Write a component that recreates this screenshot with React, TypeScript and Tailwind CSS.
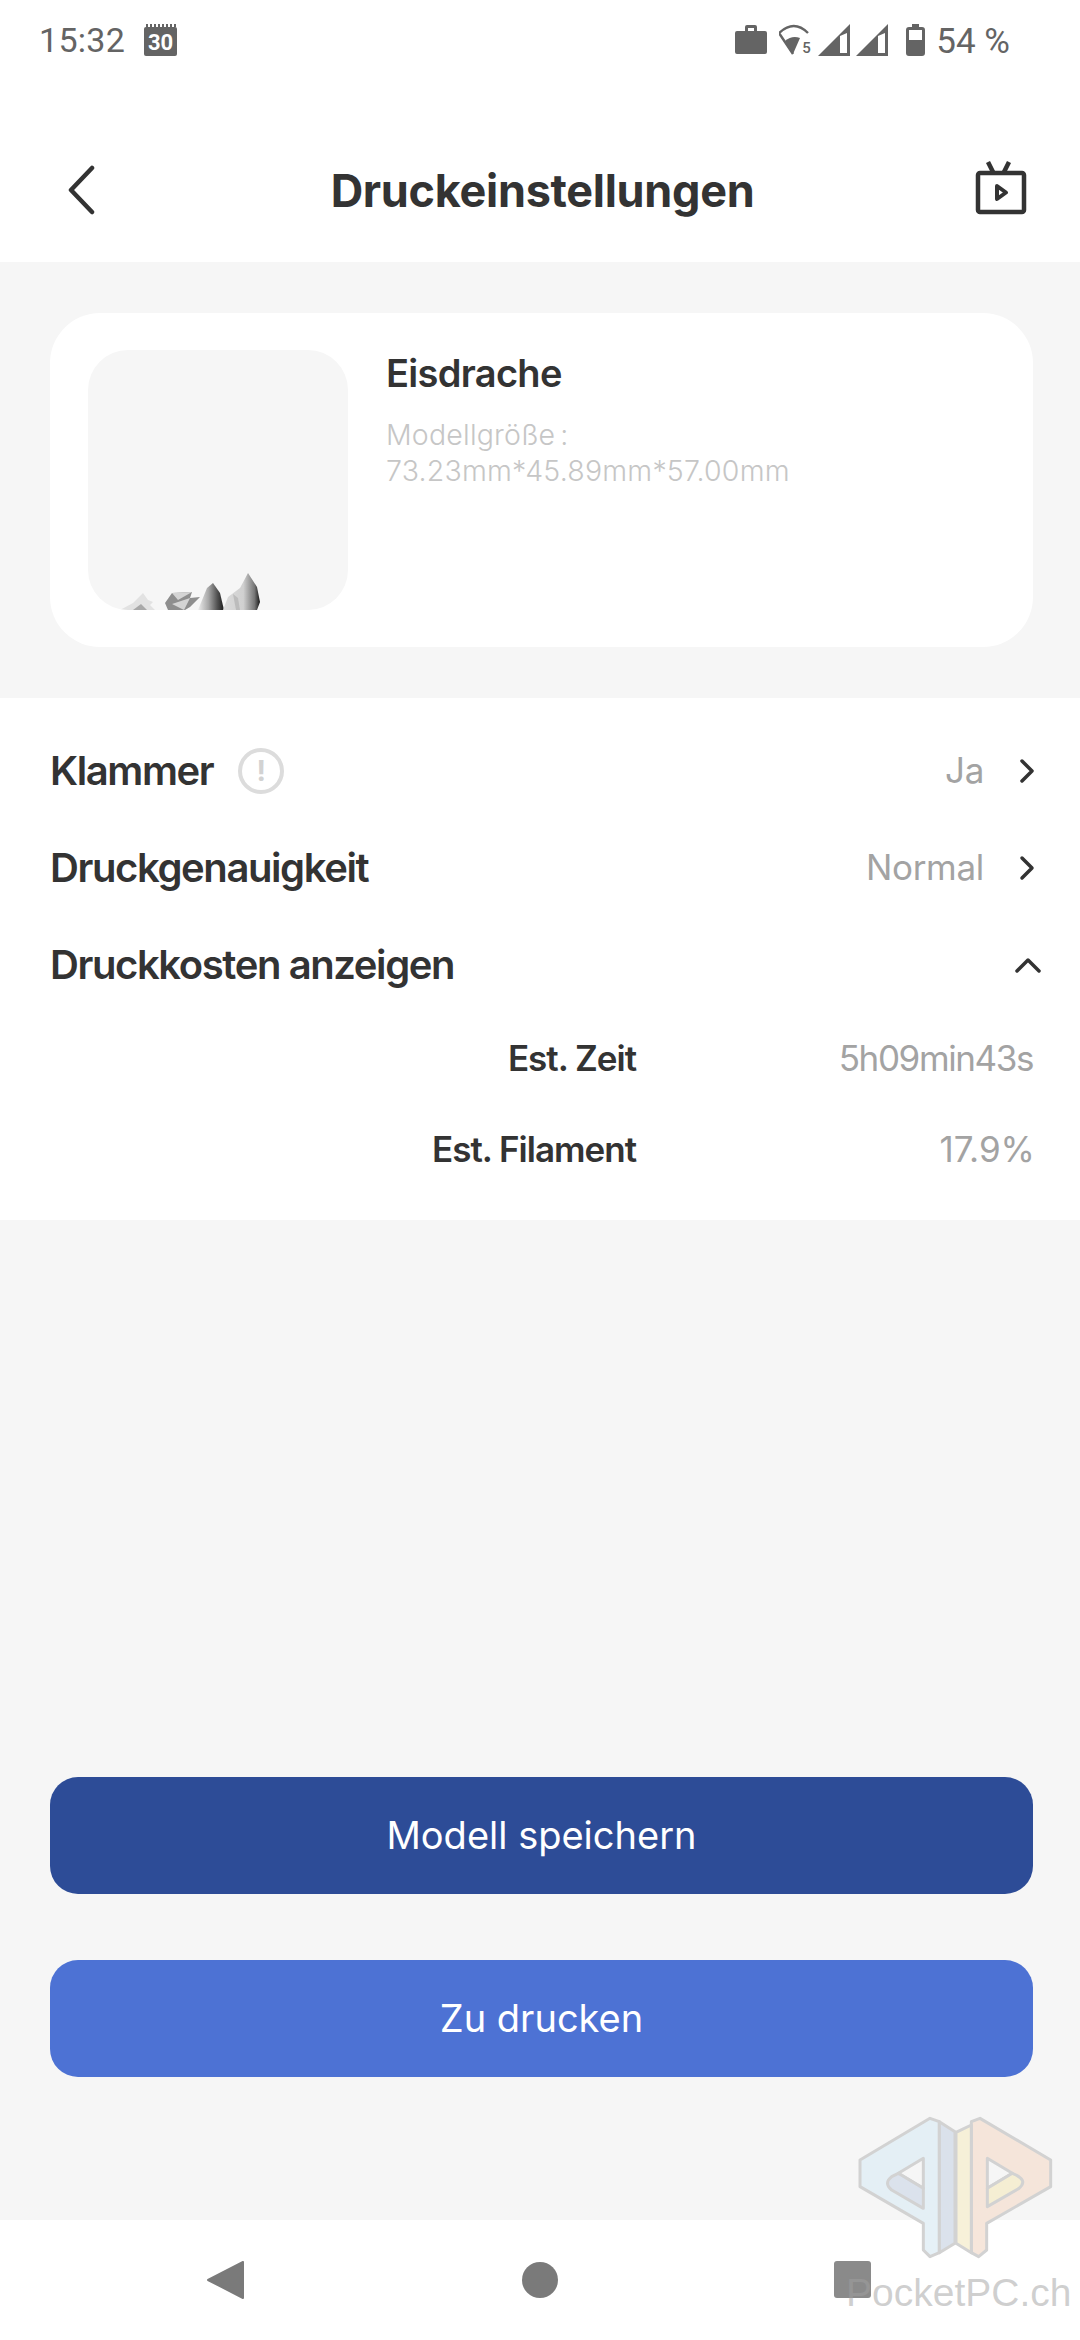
function StatusBar() {
  return (
    <div className="h-[80px] flex items-start justify-between pt-[24px] pl-[39px] pr-[70px] font-['Roboto',sans-serif] text-[#646464]">
      <div className="flex items-center gap-[19px] h-[32px]">
        <span className="text-[34px] leading-[32px] tracking-[0.3px]">15:32</span>
        <svg width="33" height="32" viewBox="0 0 33 32">
          <rect x="0" y="3" width="33" height="29" rx="2" fill="#646464" />
          <path d="M3 0v3M7 0v3M11 0v3M15 0v3M19 0v3M23 0v3M27 0v3M31 0v3" stroke="#646464" strokeWidth="2" />
          <text x="16.5" y="26" textAnchor="middle" fontSize="22" fontWeight="700" fontFamily="Roboto, sans-serif" fill="#fff">30</text>
        </svg>
      </div>
      <div className="flex items-center h-[32px]">
        <svg width="32" height="32" viewBox="0 0 32 32" className="mr-[12px]">
          <path d="M10 7V3a2 2 0 0 1 2-2h8a2 2 0 0 1 2 2v4h8a2 2 0 0 1 2 2v19a2 2 0 0 1-2 2H2a2 2 0 0 1-2-2V9a2 2 0 0 1 2-2zm3-3v3h6V4z" fill="#646464" fillRule="evenodd" />
        </svg>
        <svg width="33" height="32" viewBox="0 0 33 32" className="mr-[6px]">
          <path d="M29 9Q15-5 0 9L14 30" fill="none" stroke="#646464" strokeWidth="2.4" />
          <path d="M6 17Q13 11 21 14L14 30z" fill="#646464" />
          <text x="27.500" y="29" textAnchor="middle" fontSize="15" fontWeight="500" fontFamily="Roboto, sans-serif" fill="#646464">5</text>
        </svg>
        <svg width="32" height="32" viewBox="0 0 32 32" className="mr-[6px]">
          <path d="M0 32L32 0v32zM22 12v17h7V9z" fill="#646464" fillRule="evenodd" />
        </svg>
        <svg width="32" height="32" viewBox="0 0 32 32" className="mr-[18px]">
          <path d="M0 32L32 0v32zM22 12v17h7V9z" fill="#646464" fillRule="evenodd" />
        </svg>
        <svg width="19" height="32" viewBox="0 0 19 32" className="mr-[11px]">
          <path d="M6 0h7v3h3a3 3 0 0 1 3 3v23a3 3 0 0 1-3 3H3a3 3 0 0 1-3-3V6a3 3 0 0 1 3-3h3zM3 6v10h13V6z" fill="#646464" fillRule="evenodd" />
        </svg>
        <span className="text-[35px] leading-[32px] whitespace-nowrap mt-[3px]">54 %</span>
      </div>
    </div>
  );
}

function Header() {
  return (
    <div className="h-[182px] pt-[38px] flex items-center justify-between pl-[67px] pr-[53px]">
      <svg width="28" height="50" viewBox="0 0 28 50" fill="none" stroke="#333" strokeWidth="4.500" strokeLinecap="round" strokeLinejoin="round">
        <path d="M25 3L4 25l21 22" />
      </svg>
      <h1 className="ml-[15px] text-[45px] font-bold text-[#333] tracking-[-0.3px] leading-none">Druckeinstellungen</h1>
      <svg width="52" height="54" viewBox="0 0 52 54" fill="none" stroke="#333" strokeWidth="4.500" strokeLinejoin="round" className="-mt-[5px]">
        <path d="M13 1l5 10M34 1l-5 10" />
        <rect x="3" y="12" width="46" height="39" rx="2" />
        <path d="M22 25l9 6.500-9 6.500z" strokeWidth="4" />
      </svg>
    </div>
  );
}

function ModelPreview() {
  return (
    <div className="w-[260px] h-[260px] shrink-0 rounded-[40px] bg-[#f6f6f6] overflow-hidden flex items-end">
      <svg width="260" height="40" viewBox="0 0 260 40">
        <defs>
          <linearGradient id="rock" x1="0" y1="0" x2="1" y2="0">
            <stop offset="0" stopColor="#ededed" />
            <stop offset="0.4" stopColor="#a8a8a8" />
            <stop offset="0.75" stopColor="#505050" />
            <stop offset="1" stopColor="#1a1a1a" />
          </linearGradient>
          <linearGradient id="rock2" x1="0" y1="0" x2="1" y2="0">
            <stop offset="0" stopColor="#dcdcdc" />
            <stop offset="0.55" stopColor="#d0d0d0" />
            <stop offset="0.85" stopColor="#777" />
            <stop offset="1" stopColor="#161616" />
          </linearGradient>
        </defs>
        <path d="M32 40l13-7 10-10 5 7 5 2-3 3 5 5z" fill="#e2e2e2" />
        <path d="M45 40l8-6 6 6z" fill="#a8a8a8" />
        <path d="M77 33l7-10 20-1-2 6 10-1-10 10-5 3H80z" fill="#8e8e8e" />
        <path d="M84 23l20-1-14 8zM84 34l18-6-6 12z" fill="#d4d4d4" />
        <path d="M110 40l9-22 6-5 7 10 4 17z" fill="url(#rock)" />
        <path d="M135 40l5-13 12-9 8-15 9 14 3 15-3 8z" fill="url(#rock2)" />
        <path d="M145 24l5 4 2 12h-4z" fill="#bcbcbc" />
      </svg>
    </div>
  );
}

function SettingRow({ label, value, info }: { label: string; value?: string; info?: boolean }) {
  return (
    <div className="h-[97px] flex items-center justify-between">
      <div className="flex items-center gap-[25px]">
        <span className="text-[40px] font-semibold text-[#333] tracking-[-1.4px]">{label}</span>
        {info && (
          <div className="w-[46px] h-[46px] rounded-full border-[4px] border-[#dcdcdc] flex items-center justify-center text-[28px] font-bold text-[#d2d2d2] leading-none">
            !
          </div>
        )}
      </div>
      <div className="flex items-center">
        {value && <span className="text-[35px] text-[#a3a3a3] tracking-[-0.3px]">{value}</span>}
        {value ? (
          <svg width="16" height="26" viewBox="0 0 16 26" fill="none" stroke="#333" strokeWidth="3.500" strokeLinecap="round" strokeLinejoin="round" className="ml-[35px] -mr-[2px]">
            <path d="M3 3l10 10L3 23" />
          </svg>
        ) : (
          <svg width="28" height="16" viewBox="0 0 28 16" fill="none" stroke="#333" strokeWidth="3.500" strokeLinecap="round" strokeLinejoin="round" className="-mr-[9px]">
            <path d="M3 14L14 3l11 11" />
          </svg>
        )}
      </div>
    </div>
  );
}

function CostRow({ label, value, tight }: { label: string; value: string; tight?: boolean }) {
  return (
    <div className="h-[91px] flex items-center">
      <span className="w-[586px] text-right text-[35px] font-semibold text-[#333] tracking-[-1px]">{label}</span>
      <span className={tight ? "flex-1 text-right text-[35px] text-[#a3a3a3] tracking-[-1.4px]" : "flex-1 text-right text-[35px] text-[#a3a3a3] -mr-[2px]"}>{value}</span>
    </div>
  );
}

function Watermark() {
  return (
    <div className="absolute left-[780px] top-[2080px] w-[300px] h-[260px] pointer-events-none">
      <svg width="300" height="260" viewBox="0 0 900 780" fill="none" stroke="#d2d2d2" strokeWidth="9" strokeLinejoin="round">
        <path d="M450 115L240 240v80l190 110v80l20 20 28-12V125z M430 235l-75 45 75 45z" fill="#e0edf5" fillOpacity="0.8" fillRule="evenodd" />
        <path d="M478 125l47 30v335l-47 28z" fill="#d5dde9" fillOpacity="0.85" />
        <path d="M355 280l75 45v60l-95-55q-25-20 0-40z" fill="#d8dfea" fillOpacity="0.8" />
        <path d="M600 115l212 125v80L620 430v80l-24 20-22-12V125z M622 235l75 45-75 45z" fill="#f5e2d5" fillOpacity="0.85" fillRule="evenodd" />
        <path d="M574 135l-46 22v333l46 28z" fill="#f6eed2" fillOpacity="0.85" />
        <path d="M622 325l75-45q50 20 20 45l-95 55z" fill="#f5eed2" fillOpacity="0.9" />
      </svg>
      <span className="absolute left-[66px] top-[189px] font-['Liberation_Sans',sans-serif] text-[39px] leading-[48px] text-[#a0a0a0]/50 whitespace-nowrap">
        PocketPC.ch
      </span>
    </div>
  );
}

export default function App() {
  return (
    <div className="relative w-[1080px] h-[2340px] bg-[#f6f6f6] flex flex-col overflow-hidden font-['Inter','Noto_Sans',sans-serif]">
      <div className="bg-white">
        <StatusBar />
        <Header />
      </div>

      <div className="pl-[50px] pr-[47px] pt-[51px] pb-[51px]">
        <div className="h-[334px] rounded-[50px] bg-white pl-[38px] pt-[37px] flex gap-[38px]">
          <ModelPreview />
          <div>
            <div className="text-[38px] font-semibold text-[#333] leading-[46px] tracking-[-0.7px]">Eisdrache</div>
            <div className="mt-[21px] text-[28.500px] leading-[36px] text-[#c6c6c6] font-light tracking-[0.2px]">
              Modellgröße<span className="ml-[5px]">:</span>
              <br />
              73.23mm*45.89mm*57.00mm
            </div>
          </div>
        </div>
      </div>

      <div className="bg-white h-[522px] pt-[24px] pl-[50px] pr-[47px]">
        <SettingRow label="Klammer" value="Ja" info />
        <SettingRow label="Druckgenauigkeit" value="Normal" />
        <SettingRow label="Druckkosten anzeigen" />
        <CostRow label="Est. Zeit" value="5h09min43s" tight />
        <CostRow label="Est. Filament" value="17.9%" />
      </div>

      <div className="flex-1 flex flex-col justify-end gap-[66px] pl-[50px] pr-[47px] pb-[143px]">
        <button className="h-[117px] rounded-[28px] bg-[#2d4c97] text-white text-[38px]">Modell speichern</button>
        <button className="h-[117px] rounded-[28px] bg-[#4d72d4] text-white text-[38px]">Zu drucken</button>
      </div>

      <div className="h-[120px] bg-white flex items-start justify-between pt-[41px] pl-[207px] pr-[209px]">
        <svg width="38" height="38" viewBox="0 0 38 38"><path d="M36 1v36L1 19z" fill="#7a7a7a" stroke="#7a7a7a" strokeWidth="2" strokeLinejoin="round" /></svg>
        <div className="w-[36px] h-[36px] rounded-full bg-[#7a7a7a] mt-[1px]" />
        <div className="w-[37px] h-[37px] rounded-[3px] bg-[#8a8a8a]" />
      </div>

      <Watermark />
    </div>
  );
}
